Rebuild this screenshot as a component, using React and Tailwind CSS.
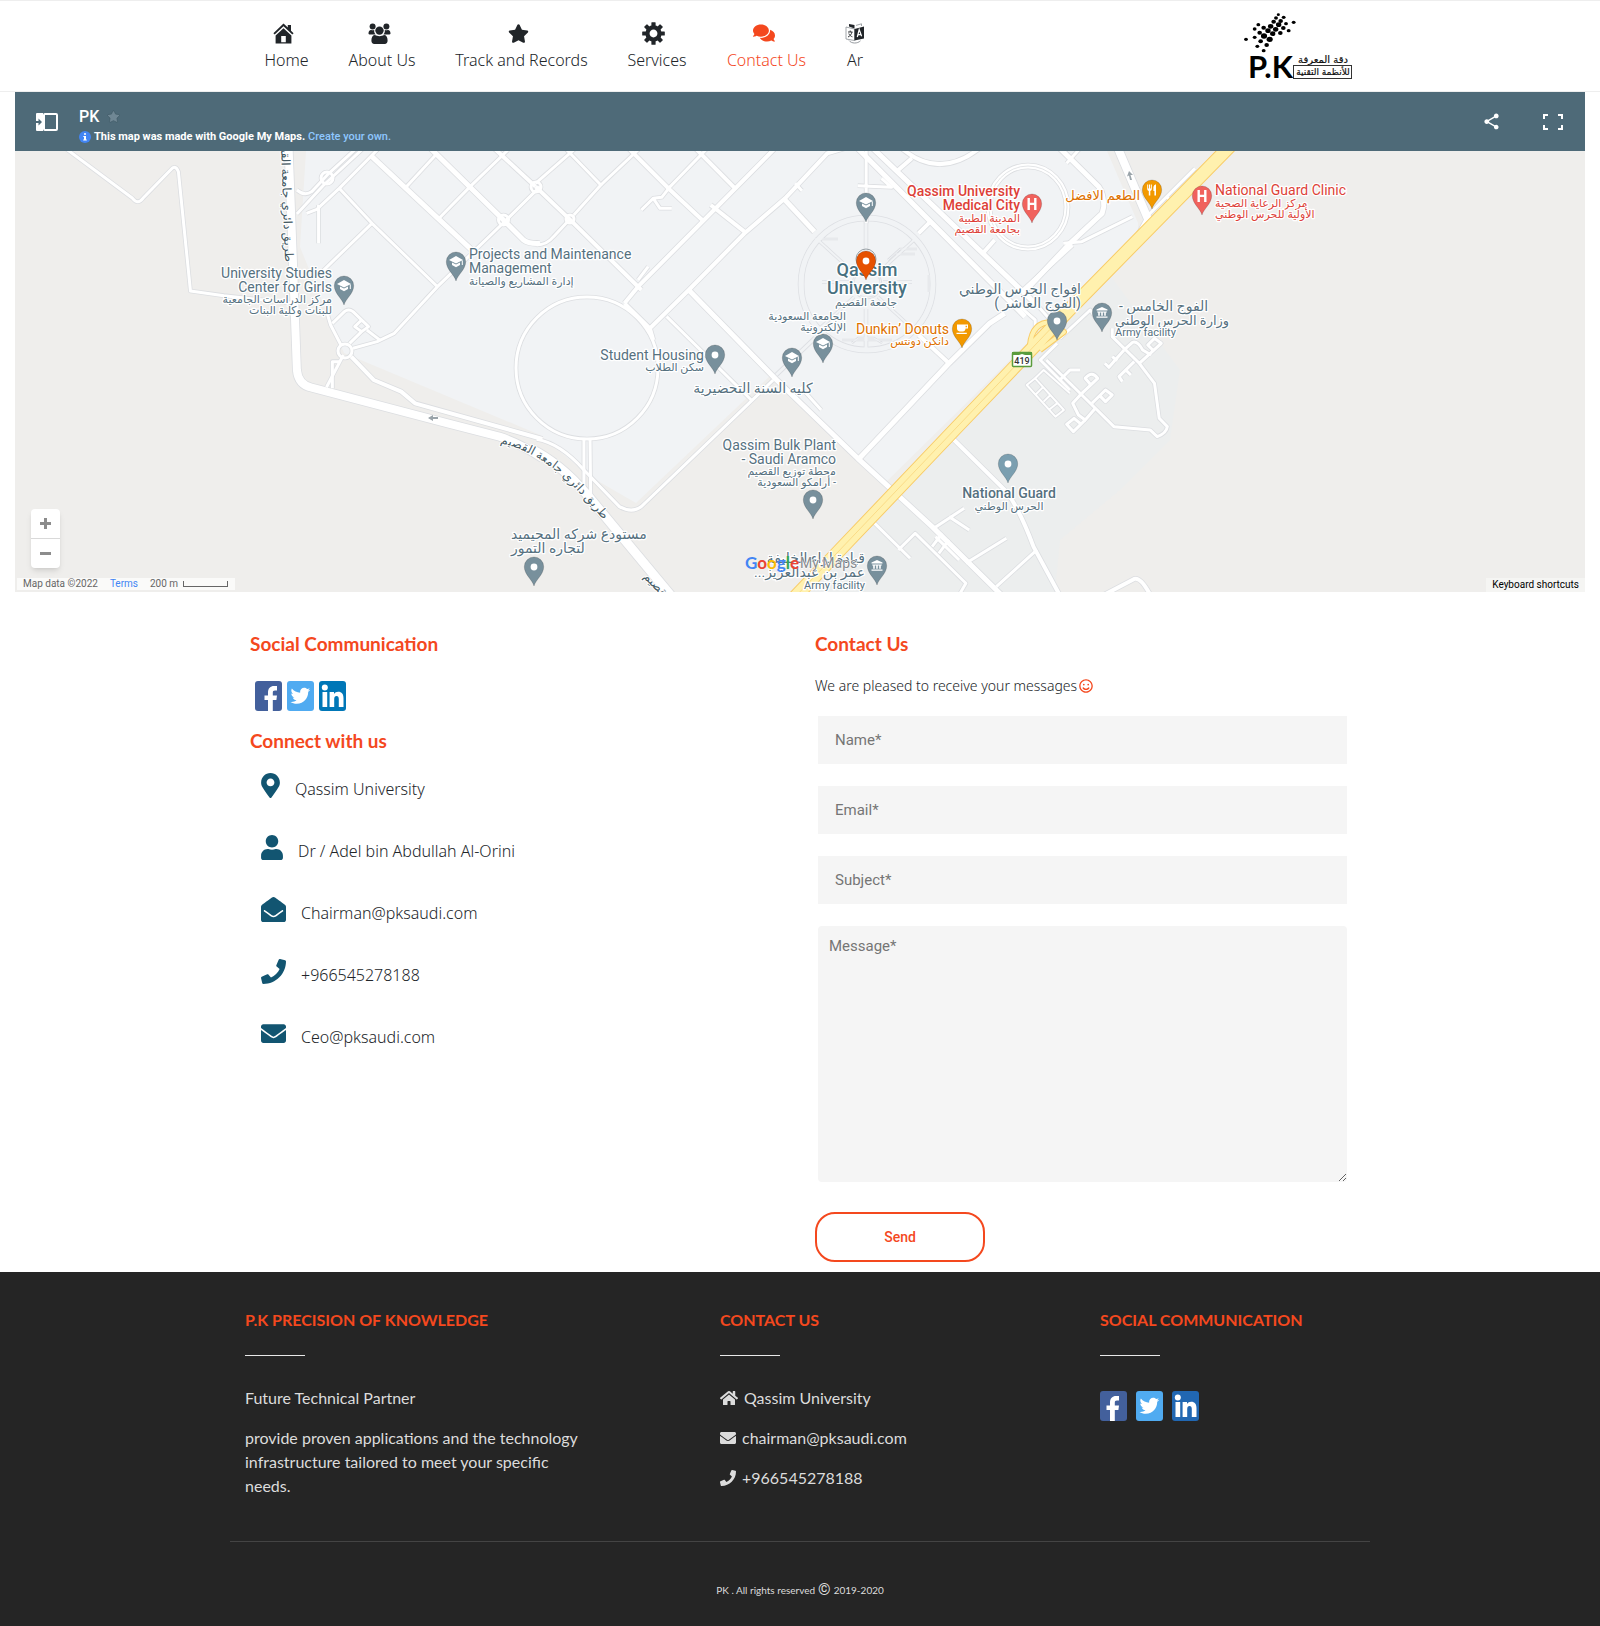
import React from "react";
import {
  FaStar, FaComments, FaMapMarkerAlt, FaUser, FaEnvelopeOpen, FaPhone, FaEnvelope, FaRegSmile, FaHome,
} from "react-icons/fa";
import { MdShare } from "react-icons/md";

/* ---------- header ---------- */

function HomeIcon() {
  return (
    <svg width="21" height="21" viewBox="0 0 21 21" fill="currentColor">
      <path d="M10.5 0.5 L14.8 4.6 V2 H18 V7.8 L20.6 10.3 L19.3 11.6 L10.5 3.2 L1.7 11.6 L0.4 10.3 Z" />
      <path fillRule="evenodd" d="M10.5 5.2 L18.4 12.6 V20.5 H2.6 V12.6 Z M8.2 13 V19.2 H12.8 V13 Z" />
    </svg>
  );
}

function UsersIcon() {
  return (
    <svg width="23" height="21" viewBox="0 0 23 21" fill="currentColor">
      <circle cx="4.6" cy="3.4" r="3" />
      <circle cx="18.4" cy="3.4" r="3" />
      <path d="M0.5 10.6 C0.5 8 1.5 6.9 3 6.9 C4.3 6.9 5.2 7.5 6.2 7.1 C6 9.2 6.5 10.4 7.6 11.6 H2.4 C1.2 11.6 .5 11.3 .5 10.6Z" />
      <path d="M22.5 10.6 C22.5 8 21.5 6.9 20 6.9 C18.7 6.9 17.8 7.5 16.8 7.1 C17 9.2 16.5 10.4 15.4 11.6 H20.6 C21.8 11.6 22.5 11.3 22.5 10.6Z" />
      <circle cx="11.5" cy="7.6" r="4.2" />
      <path d="M3.4 17.6 C3.4 14 4.8 12 7 12 C8.4 12.6 9.8 13.2 11.5 13.2 C13.2 13.2 14.6 12.6 16 12 C18.2 12 19.6 14 19.6 17.6 C19.6 19.8 18.5 21 16.8 21 H6.2 C4.5 21 3.4 19.8 3.4 17.6Z" />
    </svg>
  );
}

function GearIcon() {
  return (
    <svg width="23" height="23" viewBox="-12 -12 24 24" fill="currentColor">
      {[0, 45, 90, 135, 180, 225, 270, 315].map((a) => (
        <rect key={a} x="-2.2" y="-11.8" width="4.4" height="6" rx="0.6" transform={`rotate(${a})`} />
      ))}
      <circle r="6.3" fill="none" stroke="currentColor" strokeWidth="4.4" />
    </svg>
  );
}

function LanguageIcon() {
  return (
    <svg width="20" height="21" viewBox="0 0 20 21" fill="none">
      <path d="M1 4 L9.5 6 V17.5 L1 16 Z" stroke="#8a8f94" strokeWidth="0.8" />
      <path d="M3 9 H7.5 M5.2 7.5 V9 M7 9 C6.4 11.5 5 13 3 14 M3.8 10.5 C4.6 12.4 6 13.4 7.4 13.8" stroke="#212529" strokeWidth="0.9" />
      <path d="M9.5 6 L19 3.5 V15.5 L9.5 17.5 Z" fill="#212529" />
      <path d="M4 1 L9.5 2 L9.5 5.5 L4 3.5 Z" fill="#212529" />
      <path d="M11 2.4 L16.5 0.8 V3" stroke="#8a8f94" strokeWidth="0.8" />
      <path d="M4 17.5 C6.5 20.8 12.5 20.8 15.5 17.8" stroke="#8a8f94" strokeWidth="0.9" />
      <path d="M12.3 14 L14.2 6.6 L16.6 13.2 M12.9 12 L16 11.4" stroke="#fff" strokeWidth="1.2" />
    </svg>
  );
}

const NAV = [
  { label: "Home", icon: <HomeIcon />, width: "w-[43px]", shift: "mr-1.5" },
  { label: "About Us", icon: <UsersIcon />, width: "w-[68px]", shift: "mr-1.5" },
  { label: "Track and Records", icon: <FaStar size={21} />, width: "w-[131px]", shift: "mr-1.5" },
  { label: "Services", icon: <GearIcon />, width: "w-[60px]", shift: "mr-2" },
  { label: "Contact Us", icon: <FaComments size={22} />, width: "w-[79px]", shift: "mr-1.5", active: true },
  { label: "Ar", icon: <LanguageIcon />, width: "w-[18px]", shift: "" },
];

const LOGO_DOTS = [
  [175, 41, 4], [168, 51, 5], [191, 49, 5], [221, 64, 5], [161, 62, 6], [182, 60, 6], [198, 68, 5], [115, 71, 5],
  [176, 71, 7], [152, 76, 7], [131, 80, 6], [104, 84, 5], [167, 85, 7], [190, 81, 6], [206, 89, 5], [144, 89, 7],
  [119, 95, 6], [158, 98, 7], [181, 96, 6], [132, 105, 8], [104, 109, 5], [78, 115, 5], [149, 115, 8],
  [122, 121, 6], [140, 132, 6], [112, 136, 5], [131, 149, 5],
];

function Logo() {
  return (
    <svg width="112" height="80" viewBox="1242 5 112 80" role="img" aria-label="P.K">
      {LOGO_DOTS.map(([x, y, r], i) => (
        <ellipse key={i} cx={1220 + x / 3} cy={y / 3} rx={r / 2.6} ry={r / 3} fill="#000" />
      ))}
      <text x="1248" y="77" fontFamily="Lato" fontWeight="700" fontSize="31">P.K</text>
      <g fontFamily="'DejaVu Sans'" fontSize="10" fill="#111" stroke="#111" strokeWidth="0.2" textAnchor="middle">
        <text x="1323" y="62">دقة المعرفة</text>
        <text x="1323" y="74" fontSize="9">للأنظمة التقنية</text>
      </g>
      <rect x="1293.500" y="64.500" width="58" height="13" fill="none" stroke="#333" strokeWidth="1" />
    </svg>
  );
}

function Header() {
  return (
    <header className="border-y border-[#eeeeee] bg-white">
      <div className="mx-auto flex h-[90px] w-full max-w-[1140px] items-center justify-between pl-[35px] pr-4">
        <nav className="flex gap-10">
          {NAV.map((n) => (
            <a
              key={n.label}
              href="#"
              className={`flex flex-col items-center gap-1 whitespace-nowrap pt-0.5 ${n.width} ${n.active ? "text-[#f4481e]" : "text-[#212529]"}`}
            >
              <span className={`flex h-[22px] items-center ${n.shift}`}>{n.icon}</span>
              <span className="font-['Noto_Sans'] text-base font-light leading-6">{n.label}</span>
            </a>
          ))}
        </nav>
        <a href="#"><Logo /></a>
      </div>
    </header>
  );
}

/* ---------- map ---------- */

/* Road tiles: each holds its own origin and x scale; entries are [path, width]. */
const TILES = [
  {
    t: "translate(0 90) scale(0.3444 0.3333)",
    roads: [
      ["M190,175 L385,325 Q400,345 415,325 L495,240 Q510,222 518,245 L553,603 L650,617 L850,640", 3],
      ["M838,175 L850,500 L862,840 Q866,885 905,893 L1300,1000 L1450,1040 Q1510,1060 1575,1105", 8],
      ["M1080,200 L1375,485", 5],
      ["M1040,170 L955,250 L905,305 Q885,320 862,300", 3],
      ["M1060,170 L940,285 L862,372", 3],
      ["M1100,175 L985,295 L920,358 L890,370", 3],
      ["M925,345 L925,460", 3],
      ["M985,295 L1080,400 L1270,590", 3],
      ["M1080,400 L930,550", 3],
      ["M1025,775 L1095,755 L1145,730 L1270,590 L1470,390 L1568,290", 3],
      ["M1265,195 L1180,290", 3],
      ["M1250,175 L1462,390 L1520,450 Q1535,462 1568,460", 5],
      ["M1475,180 L1365,290 L1275,385", 3],
      ["M1435,175 L1555,290", 4],
      ["M997,795 L948,892", 3],
      ["M988,815 L965,815 L965,895", 3],
      ["M1020,800 L1085,870 L1165,905 L1205,940 L1575,1047", 4],
      ["M990,765 L960,705 L950,670", 3],
      ["M965,700 L1000,665 Q1012,655 1025,665 L1070,710 L1050,725 L1030,710 L1050,690", 3],
      ["M1050,725 L1015,760 M1065,720 L1090,740 L1105,752", 3],
    ],
  },
  {
    t: "translate(540 90) scale(0.338 0.3333)",
    roads: [
      ["M-30,1075 Q60,1120 140,1215 L390,1520", 9],
      ["M-13,280 L105,175", 3],
      ["M75,175 L180,285 L100,375", 3],
      ["M295,175 L180,285", 3],
      ["M262,175 L385,300 L480,390", 4],
      ["M700,170 L500,375 L290,590 L250,640", 4],
      ["M495,175 L385,290 L360,322 L335,325 L300,360 M335,325 L355,355 L390,355", 3],
      ["M460,175 L580,298", 4],
      ["M-13,290 L88,388 L300,600", 4],
      ["M88,388 L40,440 Q20,465 -10,465", 3],
      ["M505,345 L605,425", 4],
      ["M900,175 L850,190 L725,325 L605,430 L440,600 L325,715 L250,640", 4],
      ["M720,325 L812,425", 5],
      ["M755,280 L775,302", 3],
      ["M290,570 L320,530", 3],
      ["M440,600 L700,870 L940,1105 L1160,1310 L1350,1500 L1370,1520", 5],
      ["M375,680 L625,930", 3],
      ["M690,870 L310,1240 Q280,1275 235,1250 L130,1140 Q60,1060 -10,1048", 3],
      ["M770,890 L832,960", 3],
      ["M130,1045 L130,1215 M148,1045 L150,1225", 3],
      ["M325,715 L335,750", 4],
      ["M965,175 L965,400 M940,287 L1040,292 L1010,265", 3],
      ["M940,175 L1435,680", 5],
      ["M985,175 L1475,650", 5],
      ["M1060,240 L1100,205 M1070,175 Q1180,270 1300,175", 4],
      ["M1120,430 L1155,395", 4],
      ["M1310,490 L1345,450", 4],
      ["M1575,465 L1430,600", 4],
      ["M1375,670 L1330,700 L1210,820 L945,1105", 5],
      ["M1210,820 L1120,735", 4],
      ["M1220,1045 L1380,1205 Q1420,1260 1460,1370 L1540,1520", 4],
      ["M1420,650 L1465,690 L1465,740 M1475,650 L1510,690", 3],
      ["M985,1295 L1095,1405", 3],
      ["M1165,1315 L1255,1255 M1210,1280 L1270,1320", 3],
      ["M1060,1380 L1110,1330 L1260,1480 L1240,1515", 3],
      ["M1260,1420 L1380,1345 M1350,1490 L1470,1380", 3],
      ["M1170,1340 L1240,1410 M1190,1330 L1160,1370 M1210,1350 L1180,1390", 3],
      ["M1530,760 L1480,810 L1568,900", 3],
      ["M1465,865 L1550,960 L1525,980 L1440,885 Z M1490,890 L1465,915 M1510,915 L1490,935 M1530,940 L1505,960", 2],
      ["M1465,865 L1490,840 L1568,910", 2],
    ],
  },
  {
    t: "translate(1070 90) scale(0.338 0.3333)",
    roads: [
      ["M-30,175 L85,290 Q100,310 100,350 L95,370 L0,460 L-130,600", 5],
      ["M-10,220 L30,175", 3],
      ["M142,175 L232,390 L205,440", 8],
      ["M232,375 L370,235", 3],
      ["M185,380 L35,455 L-20,460", 3],
      ["M285,320 L302,336", 3],
      ["M-30,745 L60,660 L80,690", 3],
      ["M125,715 L125,740 L205,820 L250,880 L264,985 L288,1010 Q285,1030 258,1040 L237,1020 L130,1010 L75,955 L-70,810", 3],
      ["M160,780 L185,757 Q200,752 215,780 L240,795", 3],
      ["M205,820 L270,760 L250,745 L230,765 L245,780", 3],
      ["M160,780 L115,832 L103,820 M125,800 L140,812", 3],
      ["M190,815 L145,860 L155,875 M165,840 L180,855", 3],
      ["M35,910 L82,865 Q65,840 45,865 L62,885", 3],
      ["M65,940 L105,900 L125,915 L105,935 L88,917", 3],
      ["M35,910 L8,940 L25,975 L45,990 L75,955", 3],
      ["M45,990 L10,1025 L-10,1003 L12,985 L30,1000", 3],
      ["M-30,870 L0,840 L30,840", 3],
      ["M100,1515 L190,1467 Q210,1460 240,1520", 4],
    ],
  },
];

const CIRCLES = [
  [587, 368, 71, 3], [327, 178, 6, 3], [345, 351, 7, 3], [503.5, 220, 5, 3], [536, 187, 5, 3], [570, 219, 4, 3],
];

function Roads({ extra, color }) {
  return (
    <>
      {TILES.map((tile) => (
        <g key={tile.t} transform={tile.t} fill="none" stroke={color} strokeLinejoin="round">
          {tile.roads.map(([d, w]) => (
            <path key={d} d={d} strokeWidth={w + extra} vectorEffect="non-scaling-stroke" />
          ))}
        </g>
      ))}
      {CIRCLES.map(([x, y, r, w]) => (
        <circle key={`${x}-${y}`} cx={x} cy={y} r={r} fill="none" stroke={color} strokeWidth={w + extra} />
      ))}
      <ellipse cx="1028" cy="207" rx="39" ry="41" fill="none" stroke={color} strokeWidth={5 + extra} />
    </>
  );
}

function Ring({ color, extra }) {
  return (
    <g fill="none" stroke={color}>
      <circle cx="867" cy="284" r="66" strokeWidth={5 + extra} />
      <circle cx="867" cy="284" r="14" strokeWidth={1 + extra} />
      <path strokeWidth={3 + extra} d="M866 219 V262 M866 309 V348" />
      <path strokeWidth={2 + extra} d="M818 240 L854 273 M914 240 L878 273 M818 330 L854 297 M914 330 L878 297 M822 282 H849 M883 282 H912" />
      <path strokeWidth={1 + extra} d="M815 239 H838 M917 249 H900 L888 260 M915 254 H896 M842 340 H892 M852 343 L858 338 H874 L882 343 M848 220 H884 M803 275 V292 M929 275 V292" />
      <path strokeWidth={3 + extra} d="M773 378 L815 338" />
    </g>
  );
}

const GREY = "#78909c";
const PINS = [
  [344, 305, "cap"], [456, 281, "cap"], [866, 222, "cap"], [823, 363, "cap"], [792, 377, "cap"],
  [715, 374, "dot"], [1057, 340, "dot"], [813, 519, "dot"], [534, 586, "dot"],
  [1008, 483, "dot", "#7b9fb0"], [877, 585, "museum"], [1102, 332, "museum"],
  [1032, 223, "h", "#f0625d"], [1202, 215, "h", "#f0625d"], [962, 348, "cup", "#f29900"], [1152, 209, "fork", "#f29900"],
];

const GLYPHS = {
  dot: <circle cx="0" cy="-19" r="3.4" fill="#fff" />,
  cap: (
    <g fill="#fff">
      <path d="M0 -25 L7 -21 L0 -17.4 L-7 -21 Z" />
      <path d="M-4 -18.6 L0 -16.4 L4 -18.6 V-16 L0 -13.8 L-4 -16 Z M5.8 -20.6 h1 v4.6 h-1 Z" />
    </g>
  ),
  museum: (
    <g fill="#fff">
      <path d="M0 -25 L5.5 -22.4 V-21.4 H-5.5 V-22.4 Z M-4.8 -20.6 h9.6 v1 h-1 v3.4 h-1.6 v-3.4 h-1.4 v3.4 h-1.6 v-3.4 h-1.4 v3.4 h-1.6 v-3.4 h-1 Z M-5.5 -15.4 h11 v1.2 h-11 Z" />
    </g>
  ),
  h: <path d="M-4.5 -25 h2.4 v4.8 h4.2 v-4.8 h2.4 v12 h-2.4 v-5 h-4.2 v5 h-2.4 Z" fill="#fff" />,
  cup: (
    <path fillRule="evenodd" fill="#fff" d="M-5 -23.5 H6 V-19.5 H3.6 C3.4 -17.6 2.2 -16.6 1 -16.6 H-2.4 C-4 -16.6 -5 -17.8 -5 -19.4 Z M3.6 -22.3 V-20.7 H4.9 V-22.3 Z M-5.5 -15.3 H4.8 V-14 H-5.5 Z" />
  ),
  fork: (
    <path fill="#fff" d="M-4.8 -24.5 h1 v4 h.8 v-4 h1 v4 h.8 v-4 h1 v4.5 q0 1.6 -1.5 1.9 v4.6 h-1.5 v-4.6 q-1.6 -.3 -1.6 -1.9 Z M4 -24.8 v11.3 h-1.6 v-4.4 h-1 v-4 q.3 -2.6 2.6 -2.9 Z" />
  ),
};

function Pin({ x, y, kind, color = GREY }) {
  return (
    <g transform={`translate(${x} ${y})`}>
      <path d="M0 0 C-1.6 -6.2 -9.7 -11.4 -9.7 -19.3 A9.7 9.7 0 0 1 9.7 -19.3 C9.7 -11.4 1.6 -6.2 0 0 Z" fill={color} stroke="#00000033" strokeWidth="0.8" />
      {GLYPHS[kind]}
    </g>
  );
}

const INK = "#56717f";
const RED = "#dd3f38";
const ORANGE = "#dd7100";
/* [text, x, baseline, size, side, colour, weight]; side is the edge that x fixes */
const LABELS = [
  ["University Studies", 332, 278, 14, "r"], ["Center for Girls", 332, 292, 14, "r"],
  ["مركز الدراسات الجامعية", 332, 303, 11, "r"], ["للبنات وكلية البنات", 332, 314, 11, "r"],
  ["Projects and Maintenance", 469, 259, 14, "l"], ["Management", 469, 273, 14, "l"],
  ["إدارة المشاريع والصيانة", 469, 285, 11, "l"],
  ["Qassim", 867, 276, 18, "c", "#47707f", 500], ["University", 867, 294, 18, "c", "#47707f", 500],
  ["جامعة القصيم", 866, 306, 11, "c"],
  ["Qassim University", 1020, 196, 14, "r", RED, 500], ["Medical City", 1020, 210, 14, "r", RED, 500],
  ["المدينة الطبية", 1020, 222, 11, "r", RED], ["بجامعة القصيم", 1020, 233, 11, "r", RED],
  ["الطعم الافضل", 1140, 200, 13, "r", ORANGE],
  ["National Guard Clinic", 1215, 195, 14, "l", RED],
  ["مركز الرعاية الصحية", 1215, 207, 11, "l", RED], ["الأولية للحرس الوطني", 1215, 218, 11, "l", RED],
  ["افواج الحرس الوطني", 1081, 294, 14, "r"], ["(الفوج العاشر )", 1081, 308, 14, "r"],
  ["الفوج الخامس -", 1119, 311, 14, "l"], ["وزارة الحرس الوطني", 1115, 325, 13, "l"],
  ["Army facility", 1115, 336, 11, "l"],
  ["الجامعة السعودية", 846, 320, 11, "r"], ["الإلكترونية", 846, 331, 11, "r"],
  ["Dunkin’ Donuts", 949, 334, 14, "r", ORANGE], ["دانكن دونتس", 949, 345, 11, "r", ORANGE],
  ["Student Housing", 704, 360, 14, "r"], ["سكن الطلاب", 704, 371, 11, "r"],
  ["كليه السنة التحضيرية", 753, 393, 14, "c"],
  ["Qassim Bulk Plant", 836, 450, 14, "r"], ["- Saudi Aramco", 836, 464, 14, "r"],
  ["محطة توزيع القصيم", 836, 475, 11, "r"], ["- أرامكو السعودية", 836, 486, 11, "r"],
  ["National Guard", 1009, 498, 14, "c", INK, 500], ["الحرس الوطني", 1009, 510, 11, "c"],
  ["مستودع شركه المحيميد", 511, 539, 14, "l"], ["لتجاره التمور", 511, 553, 14, "l"],
  ["قيادة لواء الخليفة", 865, 563, 14, "r"], ["عمر بن عبدالعزيز...", 865, 577, 14, "r"],
  ["Army facility", 865, 589, 11, "r"],
];

const ANCHOR = { ltr: { l: "start", r: "end", c: "middle" }, rtl: { l: "end", r: "start", c: "middle" } };

function MapCanvas() {
  return (
    <svg className="block h-[441px] w-full" viewBox="15 151 1570 441" preserveAspectRatio="xMidYMid slice" fontFamily="Roboto, 'DejaVu Sans', sans-serif">
      <rect x="-400" y="151" width="2400" height="441" fill="#efeeec" />
      <path d="M306 151 L300 247 L331 323 L344 353 L540 435 L591 477 L636 503 L773 373 L864 467 L885 483 L1013 357 L1138 233 L1138 223 L1107 151 Z" fill="#f1f3f5" />
      <path d="M1110 275 L1180 370 L1170 440 L1120 490 L1060 540 L1055 592 L810 592 Z" fill="#eceeee" />
      <Ring color="#dddfe3" extra={1.5} />
      <Ring color="#f1f3f5" extra={0} />
      <Roads color="#dcdee1" extra={1.6} />
      <Roads color="#ffffff" extra={0} />
      <ellipse cx="1028" cy="207" rx="39" ry="41" fill="none" stroke="#dcdee1" strokeWidth="0.8" />
      <g fill="none" strokeLinejoin="round">
        <path d="M1235 141 L1068 311 L958 426 L836 554 L795 597" stroke="#f8cc68" strokeWidth="14" />
        <path d="M1052 322 Q1032 322 1030 345 M1052 322 L1064 332 L1040 350" stroke="#f8cc68" strokeWidth="6" />
        <path d="M1052 322 Q1032 322 1030 345 M1052 322 L1064 332 L1040 350" stroke="#fff1ae" strokeWidth="4" />
        <path d="M1235 141 L1068 311 L958 426 L836 554 L795 597" stroke="#fff1ae" strokeWidth="12" />
        <path d="M1058 321 L958 426 L836 554 L795 597" stroke="#fadb87" strokeWidth="1" />
      </g>
      <path d="M428 418 l5 -3 v2 h5 v2 h-5 v2 Z M1129 171 l4 4 h-2.500 l1.500 5 h-2 l-1 -4.500 l-2 1 Z" fill="#9aa4aa" />

      <g fill="#455a64" fontSize="12" stroke="#fff" strokeWidth="2" paintOrder="stroke" strokeLinejoin="round">
        <text transform="translate(285 262) rotate(88)" direction="rtl">طريق دائري جامعة القصيم</text>
        <path id="ring-road" d="M500 443 C540 452 568 478 602 518" fill="none" stroke="none" />
        <text><textPath href="#ring-road">طريق دائري جامعة القصيم</textPath></text>
        <text transform="translate(643 577) rotate(46)">القصيم</text>
      </g>

      <rect x="1012.500" y="352.500" width="19" height="14" rx="1" fill="#fff" stroke="#5a9c3c" strokeWidth="1.500" />
      <path d="M1012 352 H1032 V355 H1025 L1022 354 L1019 355 H1012 Z" fill="#5a9c3c" />
      <text x="1022" y="364" fontSize="9" fontWeight="500" textAnchor="middle" fill="#333">419</text>

      {PINS.map(([x, y, kind, color]) => (
        <Pin key={`${x}-${y}`} x={x} y={y} kind={kind} color={color} />
      ))}
      <g stroke="#ffffff" strokeWidth="2.500" paintOrder="stroke" strokeLinejoin="round">
        {LABELS.map(([text, x, y, size, side, color = INK, weight = 400]) => {
          const dir = /[\u0600-\u06ff]/.test(text) ? "rtl" : "ltr";
          return (
            <text key={`${x}-${y}`} x={x} y={y} fontSize={size} fontWeight={weight} fill={color} direction={dir} textAnchor={ANCHOR[dir][side]}>
              {text}
            </text>
          );
        })}
      </g>
      <circle cx="866" cy="259" r="10" fill="none" stroke="#5f6b72" strokeWidth="0.6" />
      <Pin x={866} y={280} kind="dot" color="#e65100" />

      <text x="745" y="569" fontSize="17" fontWeight="700" fontFamily="Lato">
        <tspan fill="#4285f4">G</tspan><tspan fill="#ea4335">o</tspan><tspan fill="#fbbc05">o</tspan><tspan fill="#4285f4">g</tspan><tspan fill="#34a853">l</tspan><tspan fill="#ea4335">e</tspan>
      </text>
      <text x="800" y="568" fontSize="14" fill="#868a8e" stroke="#ffffff" strokeWidth="1" paintOrder="stroke">My Maps</text>
    </svg>
  );
}

function MapPanel() {
  return (
    <section className="mx-[15px] font-[Roboto]">
      <div className="flex h-[59px] items-center justify-between bg-[#4e6a78] pl-[21px] pr-[22px] text-white">
        <div className="flex items-center gap-[21px]">
          <button aria-label="Toggle sidebar">
            <svg width="22" height="18" viewBox="0 0 22 18" className="block">
              <rect x="8" y="1" width="13" height="16" rx="1" fill="none" stroke="#fff" strokeWidth="2" />
              <path fillRule="evenodd" d="M1 0 H7 V18 H1 Q0 18 0 17 V10 H2.500 V12.500 L6 9 L2.500 5.500 V8 H0 V1 Q0 0 1 0 Z" fill="#fff" />
            </svg>
          </button>
          <div className="flex flex-col pt-2.5">
            <div className="flex items-center gap-2">
              <h1 className="text-base font-medium leading-5">PK</h1>
              <FaStar size={13} className="text-[#6f8794]" stroke="#3f5965" strokeWidth={30} />
            </div>
            <p className="flex items-center gap-[3px] text-[11px] font-bold leading-5">
              <svg width="12" height="12" viewBox="0 0 12 12">
                <circle cx="6" cy="6" r="6" fill="#4285f4" />
                <path d="M5 2.200 h2 v1.600 H5 Z M4.300 5 H7 v3.600 h.8 v1 H4.200 v-1 H5 V6 h-.7 Z" fill="#fff" />
              </svg>
              <span>This map was made with Google My Maps.</span>
              <a href="#" className="font-medium text-[#8ec7ff]">Create your own.</a>
            </p>
          </div>
        </div>
        <div className="flex items-center gap-[42px]">
          <button aria-label="Share"><MdShare size={19} /></button>
          <button aria-label="Full screen">
            <svg width="20" height="16" viewBox="0 0 20 16" fill="none" stroke="#fff" strokeWidth="2">
              <path d="M1 5 V1 H5 M15 1 H19 V5 M19 11 V15 H15 M5 15 H1 V11" />
            </svg>
          </button>
        </div>
      </div>
      <div className="relative overflow-hidden">
        <MapCanvas />
        <div className="absolute bottom-6 left-4 flex w-[29px] flex-col rounded-sm bg-white text-[#8c8c8c] shadow-md">
          <button aria-label="Zoom in" className="flex h-[29px] items-center justify-center">
            <svg width="11" height="11" viewBox="0 0 11 11"><path d="M0 4h4V0h3v4h4v3H7v4H4V7H0Z" fill="currentColor" /></svg>
          </button>
          <button aria-label="Zoom out" className="flex h-[30px] items-center justify-center border-t border-[#d9d9d9]">
            <svg width="11" height="3" viewBox="0 0 11 3"><path d="M0 0h11v3H0Z" fill="currentColor" /></svg>
          </button>
        </div>
        <div className="absolute bottom-0.5 left-0.5 flex h-3 items-center bg-white/70 px-1.5 text-[10px] leading-3 text-[#666666]">
          <span>Map data ©2022</span>
          <a href="#" className="ml-3 text-[#4285f4]">Terms</a>
          <span className="ml-3">200 m</span>
          <span className="ml-[5px] mr-px h-1.5 w-[45px] border-x border-b border-[#666666]" />
        </div>
        <button className="absolute bottom-0 right-0 h-3.5 bg-white/40 px-1.5 text-[10px] leading-[14px] text-black">Keyboard shortcuts</button>
      </div>
    </section>
  );
}

/* ---------- social badges ---------- */

function SocialLinks({ gap, facebookX = 0, linkedin = "#0077b7" }) {
  return (
    <div className={`flex ${gap}`}>
      <a href="#" aria-label="Facebook">
        <svg width="27" height="30" viewBox="0 0 27 30" className="block">
          <rect width="27" height="30" rx="3" fill="#43609c" />
          <path
            transform={`translate(${facebookX} 0)`}
            d="M13 30 V19 H9.500 V14.500 H13 V11.500 C13 7.200 15.500 5 19 5 H22 V9.400 H20 C18.300 9.400 17.800 10.200 17.800 11.800 V14.500 H22 L21.400 19 H17.800 V30 Z"
            fill="#fff"
          />
        </svg>
      </a>
      <a href="#" aria-label="Twitter">
        <svg width="27" height="30" viewBox="0 0 27 30" className="block">
          <rect width="27" height="30" rx="3" fill="#50abf1" />
          <g transform="translate(3.500 5) scale(0.0385 0.0385)">
            <path fill="#fff" d="M459.400 151.700c.3 4.500.3 9.100.3 13.600 0 138.700-105.600 298.600-298.600 298.600-59.500 0-114.700-17.200-161.100-47.100 8.400 1 16.600 1.300 25.300 1.300 49.100 0 94.200-16.600 130.300-44.800-46.100-1-84.800-31.200-98.100-72.800 6.500 1 13 1.600 19.800 1.600 9.400 0 18.800-1.300 27.600-3.600-48.100-9.700-84.100-52-84.100-103v-1.300c14 7.800 30.200 12.700 47.400 13.300-28.300-18.800-46.800-51-46.800-87.400 0-19.500 5.200-37.400 14.300-53 51.700 63.700 129.300 105.300 216.400 109.800-1.600-7.800-2.600-15.900-2.600-24 0-57.800 46.800-104.900 104.900-104.900 30.200 0 57.500 12.700 76.700 33.100 23.700-4.500 46.500-13.300 66.600-25.300-7.800 24.400-24.400 44.800-46.100 57.800 21.100-2.300 41.600-8.100 60.400-16.200-14.300 20.800-32.200 39.300-52.600 54.300z" />
          </g>
        </svg>
      </a>
      <a href="#" aria-label="LinkedIn">
        <svg width="27" height="30" viewBox="0 0 27 30" className="block">
          <rect width="27" height="30" rx="3" fill={linkedin} />
          <circle cx="5.800" cy="6.500" r="3" fill="#fff" />
          <path d="M3.500 11 H8.200 V26 H3.500 Z M10.600 11 H15 V13 C16 11.600 17.300 10.800 19.200 10.800 C22.800 10.800 24.500 13.200 24.500 17.200 V26 H19.800 V18 C19.800 16 19 15 17.600 15 C16 15 15.200 16.200 15.200 18.200 V26 H10.600 Z" fill="#fff" />
        </svg>
      </a>
    </div>
  );
}

/* ---------- contact ---------- */

const DETAILS = [
  { icon: FaMapMarkerAlt, text: "Qassim University", size: "h-[25px] w-[19px]" },
  { icon: FaUser, text: "Dr / Adel bin Abdullah Al-Orini", size: "h-[25px] w-[22px]" },
  { icon: FaEnvelopeOpen, text: "Chairman@pksaudi.com", size: "h-[25px] w-[25px]" },
  { icon: FaPhone, text: "+966545278188", size: "h-[25px] w-[25px]" },
  { icon: FaEnvelope, text: "Ceo@pksaudi.com", size: "h-[25px] w-[25px]" },
];

const FIELDS = [["name", "Name*", "text"], ["email", "Email*", "email"], ["subject", "Subject*", "text"]];

function Contact() {
  return (
    <main className="mx-auto grid w-full max-w-[1140px] grid-cols-[565px_1fr] pl-5 pr-[23px] pt-10 pb-2.5 text-[#212529]">
      <section>
        <h2 className="text-[19px] font-bold leading-6 text-[#f4481e]">Social Communication</h2>
        <div className="mt-[25px] pl-[5px]"><SocialLinks gap="gap-[5px]" /></div>
        <h2 className="mt-[18px] text-[19px] font-bold leading-6 text-[#f4481e]">Connect with us</h2>
        <ul className="mt-5 flex flex-col gap-[34px] pl-[11px]">
          {DETAILS.map(({ icon: Icon, text, size }) => (
            <li key={text} className="flex h-7 items-start gap-[15px]">
              <Icon className={`shrink-0 text-[#125571] ${size}`} />
              <span className="mt-1 font-['Noto_Sans'] text-base font-[350] leading-6">{text}</span>
            </li>
          ))}
        </ul>
      </section>
      <section>
        <h2 className="text-[19px] font-bold leading-6 text-[#f4481e]">Contact Us</h2>
        <p className="mt-5 flex items-center gap-0.5 font-['Noto_Sans'] text-sm font-light leading-5">
          We are pleased to receive your messages
          <FaRegSmile size={14} className="text-[#f4481e]" />
        </p>
        <form className="mt-5 flex flex-col" onSubmit={(e) => e.preventDefault()}>
          <div className="flex flex-col gap-[22px] pl-[3px] font-[Roboto]">
            {FIELDS.map(([id, label, type]) => (
              <input key={id} id={id} type={type} aria-label={label} placeholder={label}
                className="h-12 w-full bg-[#f5f5f5] px-[17px] text-[15px] placeholder:text-[#757575]" />
            ))}
            <textarea id="message" aria-label="Message*" placeholder="Message*"
              className="block h-64 w-full resize rounded-sm bg-[#f5f5f5] px-[11px] py-[9px] text-[15px] placeholder:text-[#757575]" />
          </div>
          <button type="submit" className="mt-[30px] h-[50px] w-[170px] rounded-[20px] border-2 border-[#f4481e] bg-white font-[Roboto] text-sm font-medium text-[#f4481e]">
            Send
          </button>
        </form>
      </section>
    </main>
  );
}

/* ---------- footer ---------- */

function FooterColumn({ title, children }) {
  return (
    <div className="px-[15px]">
      <h3 className="whitespace-nowrap text-base font-bold leading-6 text-[#f4481e]">{title}</h3>
      <div className="mt-[23px] mb-[30px] h-px w-[60px] bg-[#e8e8e8]" />
      {children}
    </div>
  );
}

function Footer() {
  return (
    <footer className="bg-[#252525] pt-9 text-[#dcdcdc]">
      <div className="mx-auto w-full max-w-[1140px]">
        <div className="grid h-[233px] grid-cols-[475fr_380fr_285fr]">
          <FooterColumn title="P.K PRECISION OF KNOWLEDGE">
            <p className="leading-6">Future Technical Partner</p>
            <p className="mt-4 max-w-[348px] leading-6">
              provide proven applications and the technology infrastructure tailored to meet your specific needs.
            </p>
          </FooterColumn>
          <FooterColumn title="CONTACT US">
            <ul className="flex flex-col gap-4 leading-6">
              <li className="flex items-center gap-1.5"><FaHome size={18} />Qassim University</li>
              <li className="flex items-center gap-1.5"><FaEnvelope size={16} />chairman@pksaudi.com</li>
              <li className="flex items-center gap-1.5"><FaPhone size={16} />+966545278188</li>
            </ul>
          </FooterColumn>
          <FooterColumn title="SOCIAL COMMUNICATION">
            <div className="pt-[5px]"><SocialLinks gap="gap-[9px]" facebookX={-3} linkedin="#2167b2" /></div>
          </FooterColumn>
        </div>
        <p className="flex h-[85px] items-center justify-center gap-[3px] border-t border-[#444444] pt-3 text-[10px]">
          PK . All rights reserved <span className="font-[Roboto] text-base leading-none">©</span> 2019-2020
        </p>
      </div>
    </footer>
  );
}

export default function App() {
  return (
    <div className="min-h-screen bg-white font-[Lato]">
      <Header />
      <MapPanel />
      <Contact />
      <Footer />
    </div>
  );
}
